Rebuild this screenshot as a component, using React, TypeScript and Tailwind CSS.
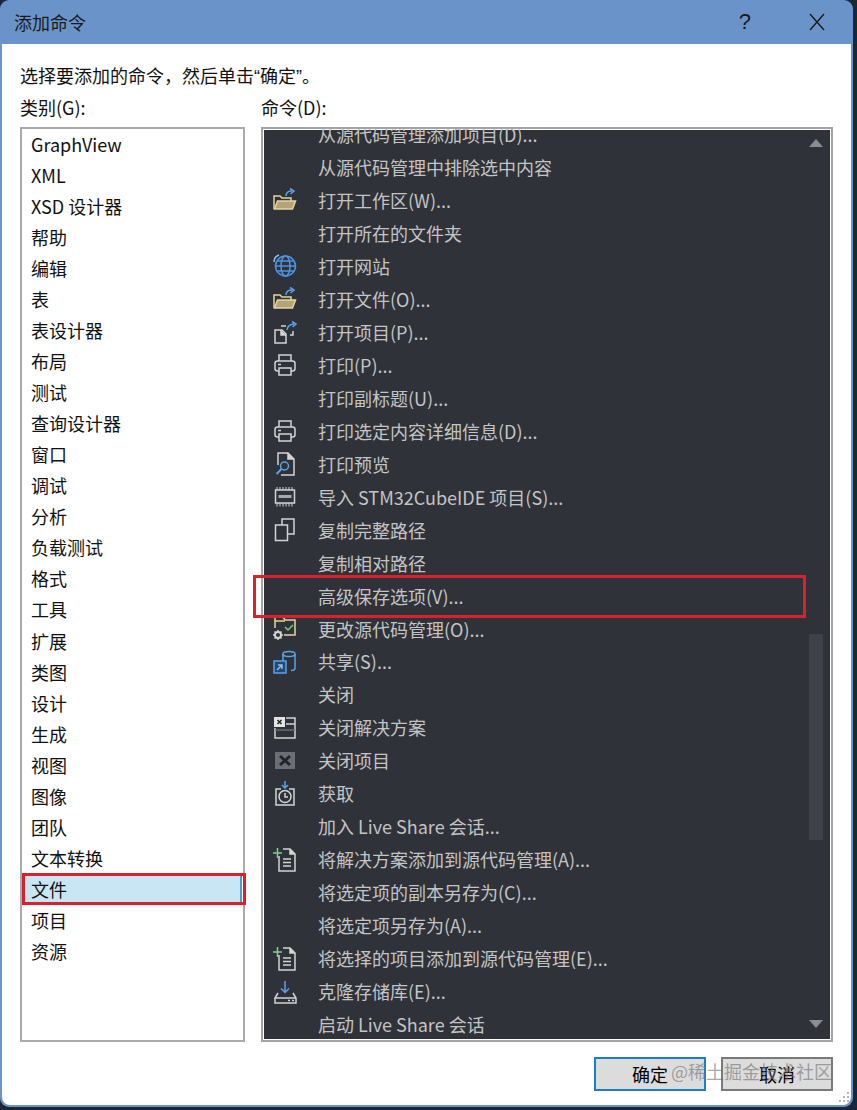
import type { ReactNode } from 'react'

const FONT = "font-['Noto_Sans_CJK_SC','Noto_Sans',sans-serif]"

const categories = [
  'GraphView', 'XML', 'XSD 设计器', '帮助', '编辑', '表', '表设计器', '布局', '测试', '查询设计器',
  '窗口', '调试', '分析', '负载测试', '格式', '工具', '扩展', '类图', '设计', '生成',
  '视图', '图像', '团队', '文本转换', '文件', '项目', '资源',
]

const Svg = ({ children }: { children: ReactNode }) => (
  <svg width="26" height="26" viewBox="0 0 26 26" fill="none" strokeWidth="1.5">{children}</svg>
)

const FolderOpen = () => (
  <Svg>
    <path d="M2 22V9h6l2 2h9v3" stroke="#e6d59f" />
    <path d="M2.500 22l3-8h18l-3 8z" fill="#b5a37a" stroke="#e6d59f" />
    <path d="M14 9c0-3 2-5 6-5" stroke="#5ba3e6" />
    <path d="M18 1.500L22 4l-3.500 3" stroke="#5ba3e6" />
  </Svg>
)

const Globe = () => (
  <Svg>
    <circle cx="13.500" cy="13" r="10" stroke="#4c95e6" />
    <ellipse cx="13.500" cy="13" rx="4.500" ry="10" stroke="#4c95e6" />
    <path d="M3.500 13h20M5 8h17M5 18h17" stroke="#4c95e6" />
    <path d="M2 9c0-3 2-6 5-7" stroke="#8cc0f2" />
  </Svg>
)

const OpenProject = () => (
  <Svg>
    <path d="M3 11h7l4 4v9H3z" fill="#2f3239" stroke="#d4d4d4" />
    <path d="M9 11v5h5" fill="#d4d4d4" stroke="#d4d4d4" />
    <path d="M9 7h5M18 16h3V12" stroke="#d4d4d4" />
    <path d="M15 11c0-3 3-6 7-6" stroke="#5ba3e6" />
    <path d="M20 2.500L24 5l-3.500 3" stroke="#5ba3e6" />
  </Svg>
)

const Printer = () => (
  <Svg>
    <path d="M7 9V3h12v6" stroke="#d4d4d4" />
    <rect x="3" y="9" width="20" height="10" rx="2.500" stroke="#d4d4d4" />
    <rect x="7" y="16" width="12" height="7" fill="#2f3239" stroke="#d4d4d4" />
    <path d="M6 12.500h3" stroke="#d4d4d4" />
  </Svg>
)

const Preview = () => (
  <Svg>
    <path d="M6 14V2h10l6 6v16H9" stroke="#d4d4d4" />
    <path d="M16 2v6h6" fill="#d4d4d4" stroke="#d4d4d4" />
    <circle cx="12.500" cy="15" r="4" stroke="#5ba3e6" />
    <path d="M9.500 18l-5 5" stroke="#5ba3e6" strokeWidth="2" />
  </Svg>
)

const Chip = () => (
  <Svg>
    <rect x="3.500" y="6" width="19" height="13" stroke="#d4d4d4" />
    <rect x="6.500" y="11" width="13" height="3" fill="#a8a8a8" />
    <path d="M5 3v3M8 3v3M11 3v3M14 3v3M17 3v3M20 3v3M5 19v3.500M8 19v3.500M11 19v3.500M14 19v3.500M17 19v3.500M20 19v3.500" stroke="#d4d4d4" strokeWidth="1" />
  </Svg>
)

const CopyPath = () => (
  <Svg>
    <path d="M10 8V2h12v15h-6" stroke="#d4d4d4" />
    <rect x="3.500" y="8" width="12" height="15.500" fill="#2f3239" stroke="#d4d4d4" />
  </Svg>
)

const SourceFolder = () => (
  <Svg>
    <path d="M3 12V1h8l2 3h10v15H12" stroke="#e6d59f" />
    <path d="M3 5h10" stroke="#e6d59f" />
    <path d="M13 11l3 3 5-5" stroke="#79c97d" />
    <circle cx="6" cy="19" r="3" stroke="#d4d4d4" strokeWidth="2" />
    <path d="M6 14v2M6 22v2M1 19h2M9 19h2M2.500 15.500l1.500 1.500M8 21l1.500 1.500M9.500 15.500L8 17M4 21l-1.500 1.500" stroke="#d4d4d4" strokeWidth="1.500" />
  </Svg>
)

const Share = () => (
  <Svg>
    <ellipse cx="17" cy="5" rx="6" ry="2.500" stroke="#5ba3e6" />
    <path d="M11 5v7M23 5v14c0 1.500-2 2.500-4 2.500" stroke="#5ba3e6" />
    <rect x="2" y="12" width="12" height="12" fill="#1f4b73" stroke="#5ba3e6" />
    <path d="M5 21l5-5M6 16h4v4" stroke="#8cc0f2" />
  </Svg>
)

const CloseSolution = () => (
  <Svg>
    <path d="M14 3h9v20H3V13" stroke="#d4d4d4" />
    <path d="M14 9h9" stroke="#d4d4d4" />
    <path d="M3 15h20" stroke="#6b6e73" />
    <rect x="2" y="2" width="11" height="10" fill="#e4e4e4" />
    <path d="M5.500 5l4 4M9.500 5l-4 4" stroke="#222" />
  </Svg>
)

const CloseProject = () => (
  <Svg>
    <rect x="3" y="4" width="20" height="17" fill="#6b6e73" />
    <path d="M8 8l10 9M18 8L8 17" stroke="#23252a" strokeWidth="3" />
  </Svg>
)

const Fetch = () => (
  <Svg>
    <path d="M13 0v6M10 4l3 3 3-3" stroke="#5ba3e6" />
    <path d="M9 8H4v16h18V8h-5" stroke="#d4d4d4" />
    <circle cx="13" cy="15.500" r="6" stroke="#d4d4d4" />
    <path d="M13 12v4h3" stroke="#d4d4d4" />
  </Svg>
)

const AddFile = () => (
  <Svg>
    <path d="M7 9v15h16V7l-5-5h-7" stroke="#d4d4d4" />
    <path d="M18 2v5h5" fill="#d4d4d4" stroke="#d4d4d4" />
    <path d="M11 12h8M11 15.500h8M11 19h8" stroke="#d4d4d4" />
    <path d="M5.500 1v10M1 6h9" stroke="#7fd083" />
  </Svg>
)

const Clone = () => (
  <Svg>
    <path d="M13 2v11M9 9.500l4 4 4-4" stroke="#5ba3e6" />
    <path d="M6 14l-3 5v5h21v-5l-3-5" stroke="#d4d4d4" />
    <path d="M3 19h21" stroke="#d4d4d4" />
    <path d="M16 21.500h2M20 21.500h2" stroke="#d4d4d4" />
  </Svg>
)

const commands: { label: string; icon?: ReactNode }[] = [
  { label: '从源代码管理添加项目(D)...' },
  { label: '从源代码管理中排除选中内容' },
  { label: '打开工作区(W)...', icon: <FolderOpen /> },
  { label: '打开所在的文件夹' },
  { label: '打开网站', icon: <Globe /> },
  { label: '打开文件(O)...', icon: <FolderOpen /> },
  { label: '打开项目(P)...', icon: <OpenProject /> },
  { label: '打印(P)...', icon: <Printer /> },
  { label: '打印副标题(U)...' },
  { label: '打印选定内容详细信息(D)...', icon: <Printer /> },
  { label: '打印预览', icon: <Preview /> },
  { label: '导入 STM32CubeIDE 项目(S)...', icon: <Chip /> },
  { label: '复制完整路径', icon: <CopyPath /> },
  { label: '复制相对路径' },
  { label: '高级保存选项(V)...' },
  { label: '更改源代码管理(O)...', icon: <SourceFolder /> },
  { label: '共享(S)...', icon: <Share /> },
  { label: '关闭' },
  { label: '关闭解决方案', icon: <CloseSolution /> },
  { label: '关闭项目', icon: <CloseProject /> },
  { label: '获取', icon: <Fetch /> },
  { label: '加入 Live Share 会话...' },
  { label: '将解决方案添加到源代码管理(A)...', icon: <AddFile /> },
  { label: '将选定项的副本另存为(C)...' },
  { label: '将选定项另存为(A)...' },
  { label: '将选择的项目添加到源代码管理(E)...', icon: <AddFile /> },
  { label: '克隆存储库(E)...', icon: <Clone /> },
  { label: '启动 Live Share 会话' },
]

const grip = ['col-start-3', 'col-start-2', 'col-start-3', 'col-start-1', 'col-start-2', 'col-start-3']

export default function App() {
  return (
    <div className={`h-[1110px] w-[857px] overflow-hidden bg-[#1b2636] ${FONT}`}>
      <div className="relative flex h-[1107px] w-[853px] flex-col overflow-hidden rounded-[9px] bg-[#6a94c9] px-[2px] pb-[2px]">
        <div className="flex h-[44px] shrink-0 items-center justify-between pl-[12px] pr-[25px] text-[#1a1a1a]">
          <span className="text-[18px]">添加命令</span>
          <div className="flex items-center gap-[57px]">
            <span className="font-['Liberation_Sans'] text-[22px] leading-none">?</span>
            <svg width="18" height="18" viewBox="0 0 18 18" stroke="#1a1a1a" strokeWidth="1.400">
              <path d="M2 1l14 16M16 1L2 17" />
            </svg>
          </div>
        </div>

        <div className="relative flex min-h-0 flex-1 flex-col rounded-b-[8px] bg-white pl-[18px] pr-[18px] text-[#111]">
          <p className="mt-[18px] h-[26px] text-[18px] leading-[26px]">
            选择要添加的命令，然后单击<span className="font-['Liberation_Sans']">“</span>确定<span className="font-['Liberation_Sans']">”</span>。
          </p>
          <div className="mt-[7px] flex h-[25px] gap-[16px] text-[18px] leading-[25px]">
            <span className="w-[225px]">类别(G):</span>
            <span>命令(D):</span>
          </div>

          <div className="mt-[7px] flex h-[915px] gap-[16px]">
            <ul className="h-full w-[225px] shrink-0 border-2 border-[#aaaaaa] text-[18px]">
              {categories.map(name => (
                <li
                  key={name}
                  className={`flex h-[31.040px] items-center pl-[9px] ${name === '文件' ? 'mr-[1px] border-r-2 border-[#4b9fc9] bg-[#c9e6f5]' : ''}`}
                >
                  {name}
                </li>
              ))}
            </ul>

            <div className="flex h-full w-[572px] shrink-0 overflow-hidden border-2 border-[#a3a3a3] bg-[#2f3239] shadow-[inset_0_0_0_1px_#fff]">
              <ul className="ml-[1px] mt-[-11px] w-[530px] shrink-0 text-[18px] text-[#c4c4c4]">
                {commands.map(cmd => (
                  <li key={cmd.label} className="flex h-[32.970px] items-center">
                    <span className="flex w-[54px] shrink-0 justify-center pr-[13px]">{cmd.icon}</span>
                    <span className="whitespace-nowrap">{cmd.label}</span>
                  </li>
                ))}
              </ul>
              <div className="my-[1px] flex w-[37px] flex-col items-center pl-[6px]">
                <div className="mt-[9px] h-0 w-0 border-x-[7px] border-b-[8px] border-x-transparent border-b-[#8a8c90]" />
                <div className="mt-[487px] h-[206px] w-[14px] bg-[#3e4148]" />
                <div className="mt-[180px] h-0 w-0 border-x-[7px] border-t-[8px] border-x-transparent border-t-[#8a8c90]" />
              </div>
            </div>
          </div>

          <div className="mt-[15px] flex justify-end gap-[15px] text-[18px] text-black">
            <button className="h-[34px] w-[112px] border-2 border-[#1b7fc4] bg-[#dcdcdc] leading-[30px]">确定</button>
            <button className="h-[34px] w-[112px] border-2 border-[#7a7a7a] bg-[#dcdcdc] leading-[30px]">取消</button>
          </div>

          {/* annotations drawn over the dialog */}
          <div className="absolute left-[251px] top-[531px] h-[43px] w-[553px] border-[3px] border-[#dc1f2c]" />
          <div className="absolute left-[20px] top-[829px] h-[32px] w-[224px] border-[3px] border-[#dc1f2c]" />
          <span className="absolute right-[19px] top-[1014px] whitespace-nowrap text-[18px] text-[#6f6f6f]/60">@稀土掘金技术社区</span>

          <div className="absolute bottom-[3px] right-[2px] grid grid-cols-3 gap-[2px]">
            {grip.map((col, i) => (
              <i key={i} className={`h-[2px] w-[2px] bg-[#b5b5b5] ${col}`} />
            ))}
          </div>
        </div>
      </div>
    </div>
  )
}
